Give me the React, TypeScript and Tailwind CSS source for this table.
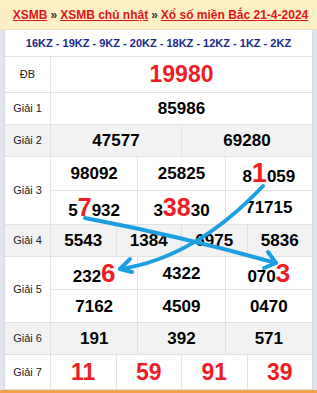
import React from "react";

const RED = "text-[#ee1c25]";

function Cell({ children, last }: { children: React.ReactNode; last?: boolean }) {
  return (
    <div
      className={`flex-1 flex items-center justify-center font-bold text-[17px] text-black leading-none ${
        last ? "" : "border-r border-[#e2e2e2]"
      }`}
    >
      {children}
    </div>
  );
}

function Row({
  label,
  h,
  gray,
  children,
}: {
  label: string;
  h: string;
  gray?: boolean;
  children: React.ReactNode;
}) {
  return (
    <div className={`flex border-b border-[#e2e2e2] ${h} ${gray ? "bg-[#f2f2f2]" : "bg-white"}`}>
      <div className="w-[46px] shrink-0 border-r border-[#e2e2e2] flex items-center justify-center text-[11px] text-[#222]">
        {label}
      </div>
      <div className="flex-1 flex flex-col">{children}</div>
    </div>
  );
}

function Sub({ children, border }: { children: React.ReactNode; border?: boolean }) {
  return <div className={`flex flex-1 ${border ? "border-b border-[#e2e2e2]" : ""}`}>{children}</div>;
}

function Big({ children, size = "text-[25px]" }: { children: React.ReactNode; size?: string }) {
  return <span className={`${RED} ${size}`}>{children}</span>;
}

export default function App() {
  return (
    <div className="relative w-[317px] h-[393px] bg-[#dfe4ee] font-['Liberation_Sans',Arial,sans-serif] overflow-hidden">
      <div className="h-[30px] bg-[#fdf0c4] border-b border-[#eadfb8] flex items-center justify-center pl-[4px] text-[12px] font-bold whitespace-nowrap">
        <span className="text-[#e0141e] underline">XSMB</span>
        <span className="text-[#333] mx-[3px]">»</span>
        <span className="text-[#e0141e] underline">XSMB chủ nhật</span>
        <span className="text-[#333] mx-[3px]">»</span>
        <span className="text-[#e0141e] underline">Xổ số miền Bắc 21-4-2024</span>
      </div>
      <div className="ml-[4px] w-[309px] border-x border-[#d6d9de] bg-white">
        <div className="h-[27px] border-b border-[#e2e2e2] flex items-center justify-center text-[11px] font-bold text-[#1c2a8c] whitespace-nowrap">
          16KZ - 19KZ - 9KZ - 20KZ - 18KZ - 12KZ - 1KZ - 2KZ
        </div>
        <Row label="ĐB" h="h-[36px]">
          <Sub>
            <Cell last>
              <span className={`${RED} text-[23px]`}>19980</span>
            </Cell>
          </Sub>
        </Row>
        <Row label="Giải 1" h="h-[32px]">
          <Sub>
            <Cell last>85986</Cell>
          </Sub>
        </Row>
        <Row label="Giải 2" h="h-[32px]" gray>
          <Sub>
            <Cell>47577</Cell>
            <Cell last>69280</Cell>
          </Sub>
        </Row>
        <Row label="Giải 3" h="h-[68px]">
          <Sub border>
            <Cell>98092</Cell>
            <Cell>25825</Cell>
            <Cell last>
              <span className="flex items-baseline">
                8<Big size="text-[27px]">1</Big>059
              </span>
            </Cell>
          </Sub>
          <Sub>
            <Cell>
              <span className="flex items-baseline">
                5<Big>7</Big>932
              </span>
            </Cell>
            <Cell>
              <span className="flex items-baseline">
                3<Big>38</Big>30
              </span>
            </Cell>
            <Cell last>71715</Cell>
          </Sub>
        </Row>
        <Row label="Giải 4" h="h-[32px]" gray>
          <Sub>
            <Cell>5543</Cell>
            <Cell>1384</Cell>
            <Cell>6975</Cell>
            <Cell last>5836</Cell>
          </Sub>
        </Row>
        <Row label="Giải 5" h="h-[66px]">
          <Sub border>
            <Cell>
              <span className="flex items-baseline">
                232<Big size="text-[26px]">6</Big>
              </span>
            </Cell>
            <Cell>4322</Cell>
            <Cell last>
              <span className="flex items-baseline">
                070<Big size="text-[26px]">3</Big>
              </span>
            </Cell>
          </Sub>
          <Sub>
            <Cell>7162</Cell>
            <Cell>4509</Cell>
            <Cell last>0470</Cell>
          </Sub>
        </Row>
        <Row label="Giải 6" h="h-[32px]" gray>
          <Sub>
            <Cell>191</Cell>
            <Cell>392</Cell>
            <Cell last>571</Cell>
          </Sub>
        </Row>
        <Row label="Giải 7" h="h-[35px]">
          <Sub>
            <Cell>
              <span className={`${RED} text-[23px]`}>11</span>
            </Cell>
            <Cell>
              <span className={`${RED} text-[23px]`}>59</span>
            </Cell>
            <Cell>
              <span className={`${RED} text-[23px]`}>91</span>
            </Cell>
            <Cell last>
              <span className={`${RED} text-[23px]`}>39</span>
            </Cell>
          </Sub>
        </Row>
      </div>
      <div className="h-[3px] bg-[#f5a04a]" />
      <svg
        className="absolute left-0 top-0 pointer-events-none"
        width="317"
        height="393"
        viewBox="0 0 317 393"
      >
        <g stroke="#1b9fe2" strokeWidth="4" fill="none" strokeLinecap="round" strokeLinejoin="round">
          <path d="M263 186 Q195 258 120 269" />
          <path d="M120 269 L130 259 M120 269 L132 272" />
          <path d="M85 218 Q180 236 276 263" />
          <path d="M276 263 L268 252 M276 263 L264 268" />
        </g>
      </svg>
    </div>
  );
}
